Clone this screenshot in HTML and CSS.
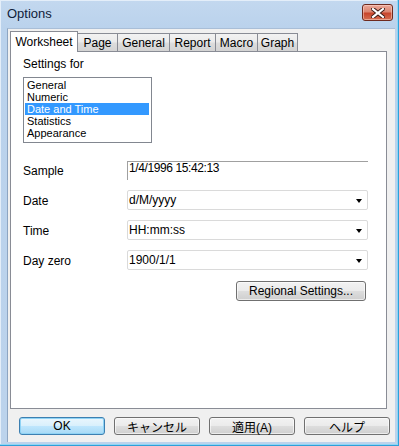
FILE: index.html
```html
<!DOCTYPE html>
<html>
<head>
<meta charset="utf-8">
<link rel="stylesheet" href="styles.css">
</head>
<body>
<div class="window">
  <div class="titlebar">
    <span class="title">Options</span>
    <div class="close">
      <svg width="14" height="10" viewBox="0 0 14 10">
        <path d="M2 1 L12 9 M12 1 L2 9" stroke="#3a1a14" stroke-width="4" stroke-linecap="square" fill="none"/>
        <path d="M2 1 L12 9 M12 1 L2 9" stroke="#ffffff" stroke-width="2.2" stroke-linecap="square" fill="none"/>
      </svg>
    </div>
  </div>
  <div class="client">
    <div class="tabs">
      <div class="tab active t-ws">Worksheet</div>
      <div class="tab t-page">Page</div>
      <div class="tab t-gen">General</div>
      <div class="tab t-rep">Report</div>
      <div class="tab t-mac">Macro</div>
      <div class="tab t-gra">Graph</div>
    </div>
    <div class="panel">
      <div class="settings-label">Settings for</div>
      <div class="listbox">
        <div class="item">General</div>
        <div class="item">Numeric</div>
        <div class="item selected">Date and Time</div>
        <div class="item">Statistics</div>
        <div class="item">Appearance</div>
      </div>
      <div class="form">
        <div class="row sample-row">
          <span class="label">Sample</span>
          <div class="sample">1/4/1996 15:42:13</div>
        </div>
        <div class="row">
          <span class="label">Date</span>
          <div class="combo"><span>d/M/yyyy</span><span class="arrow"></span></div>
        </div>
        <div class="row">
          <span class="label">Time</span>
          <div class="combo"><span>HH:mm:ss</span><span class="arrow"></span></div>
        </div>
        <div class="row">
          <span class="label">Day zero</span>
          <div class="combo"><span>1900/1/1</span><span class="arrow"></span></div>
        </div>
        <div class="regional-row">
          <div class="btn regional">Regional Settings...</div>
        </div>
      </div>
    </div>
    <div class="buttons">
      <div class="btn default">OK</div>
      <div class="btn">キャンセル</div>
      <div class="btn">適用(A)</div>
      <div class="btn">ヘルプ</div>
    </div>
  </div>
</div>
</body>
</html>
```
FILE: styles.css
```css
* { box-sizing: border-box; }
html, body { margin: 0; padding: 0; }
body {
  width: 399px;
  height: 446px;
  overflow: hidden;
  font-family: "Liberation Sans", "Noto Sans CJK JP", sans-serif;
  font-size: 12px;
  color: #000;
}
.window {
  width: 399px;
  height: 446px;
  display: flex;
  flex-direction: column;
  background: linear-gradient(#c3d8ef 0px, #bad2ec 28px, #bcd3ec 100%);
  box-shadow: inset -1px -1px 0 #2e9fd8, inset -2px -2px 0 #8fd6f5, inset 1px 1px 0 #e4eef9;
}
.titlebar {
  height: 28px;
  display: flex;
  justify-content: space-between;
  align-items: flex-start;
  padding: 4px 6px 0 7px;
}
.title {
  font-family: "Liberation Sans", sans-serif;
  font-size: 13px;
  line-height: 18px;
  color: #10213a;
  padding-top: 1px;
}
.close {
  width: 31px;
  height: 17px;
  border: 1px solid #6e2a1e;
  border-radius: 3px;
  background: linear-gradient(#eba899 0%, #dc8671 45%, #c8452c 55%, #d56f52 100%);
  display: flex;
  align-items: center;
  justify-content: center;
  box-shadow: inset 0 0 0 1px rgba(255,220,210,0.5);
}
.client {
  flex: 1;
  margin: 0 4px 4px 7px;
  background: #f0f0f0;
  border-left: 1px solid #8da5c2;
  border-top: 1px solid #a9bed7;
  display: flex;
  flex-direction: column;
}
.tabs {
  display: flex;
  align-items: flex-end;
  height: 21px;
  margin: 2px 0 -1px 2px;
  position: relative;
  z-index: 1;
}
.tab {
  height: 18px;
  margin-bottom: 1px;
  border: 1px solid #898c95;
  border-bottom: none;
  border-left: none;
  background: linear-gradient(#f2f2f2 0%, #ebebeb 45%, #dcdcdc 55%, #d3d3d3 100%);
  text-align: center;
  line-height: 16px;
  padding-top: 1px;
  white-space: nowrap;
}
.tab.active {
  height: 21px;
  margin-bottom: 0;
  background: #fff;
  border-left: 1px solid #898c95;
  line-height: 14px;
  padding-top: 3px;
}
.t-ws { width: 68px; }
.t-page { width: 40px; }
.t-gen { width: 52px; }
.t-rep { width: 46px; }
.t-mac { width: 42px; }
.t-gra { width: 40px; }
.panel {
  margin-left: 2px;
  width: 377px;
  height: 358px;
  background: #fff;
  border: 1px solid #898c95;
  padding: 5px 0 0 12px;
}
.settings-label {
  line-height: 14px;
  height: 14px;
}
.listbox {
  margin-top: 6px;
  width: 129px;
  height: 66px;
  border: 1px solid #828790;
  padding: 1px 2px 0 1px;
}
.item {
  height: 12px;
  line-height: 12px;
  font-size: 11px;
  padding-left: 2px;
  white-space: nowrap;
}
.item.selected {
  background: #3399ff;
  color: #fff;
}
.form {
  margin-top: 18px;
  width: 345px;
  display: flex;
  flex-direction: column;
  gap: 10px;
}
.row {
  display: flex;
  align-items: center;
  height: 20px;
}
.row.sample-row { height: 19px; }
.label {
  width: 104px;
  padding-top: 1px;
}
.sample {
  flex: 1;
  height: 19px;
  border-top: 1px solid #a0a0a0;
  border-left: 1px solid #a0a0a0;
  padding: 0 0 0 1px;
  line-height: 12px;
  font-size: 12px;
  letter-spacing: -0.4px;
}
.combo {
  flex: 1;
  height: 20px;
  border: 1px solid #dadada;
  border-radius: 2px;
  display: flex;
  align-items: center;
  justify-content: space-between;
  padding: 0 5px 0 1px;
}
.arrow {
  width: 0;
  height: 0;
  border-left: 3.5px solid transparent;
  border-right: 3.5px solid transparent;
  border-top: 4px solid #000;
  margin-top: 2px;
}
.regional-row {
  display: flex;
  justify-content: flex-end;
  padding-right: 2px;
  margin-top: 1px;
}
.btn {
  height: 19px;
  border: 1px solid #707070;
  border-radius: 3px;
  background: linear-gradient(#f2f2f2 0%, #ebebeb 48%, #dddddd 52%, #cfcfcf 100%);
  display: flex;
  align-items: center;
  justify-content: center;
  box-shadow: inset 0 0 0 1px rgba(255,255,255,0.6);
  font-family: "Liberation Sans", "Noto Sans CJK JP", sans-serif;
  font-size: 12px;
  white-space: nowrap;
}
.regional { width: 130px; height: 20px; }
.buttons {
  display: flex;
  gap: 9px;
  padding-left: 11px;
  margin-top: 8px;
}
.buttons .btn { width: 86px; height: 18px; }
.btn.default {
  border-color: #3c7fb1;
  background: linear-gradient(#eaf6fd 0%, #d9f0fc 48%, #bee6fd 52%, #a7d9f5 100%);
  box-shadow: inset 0 0 0 1px #8fd3f5;
}
```
